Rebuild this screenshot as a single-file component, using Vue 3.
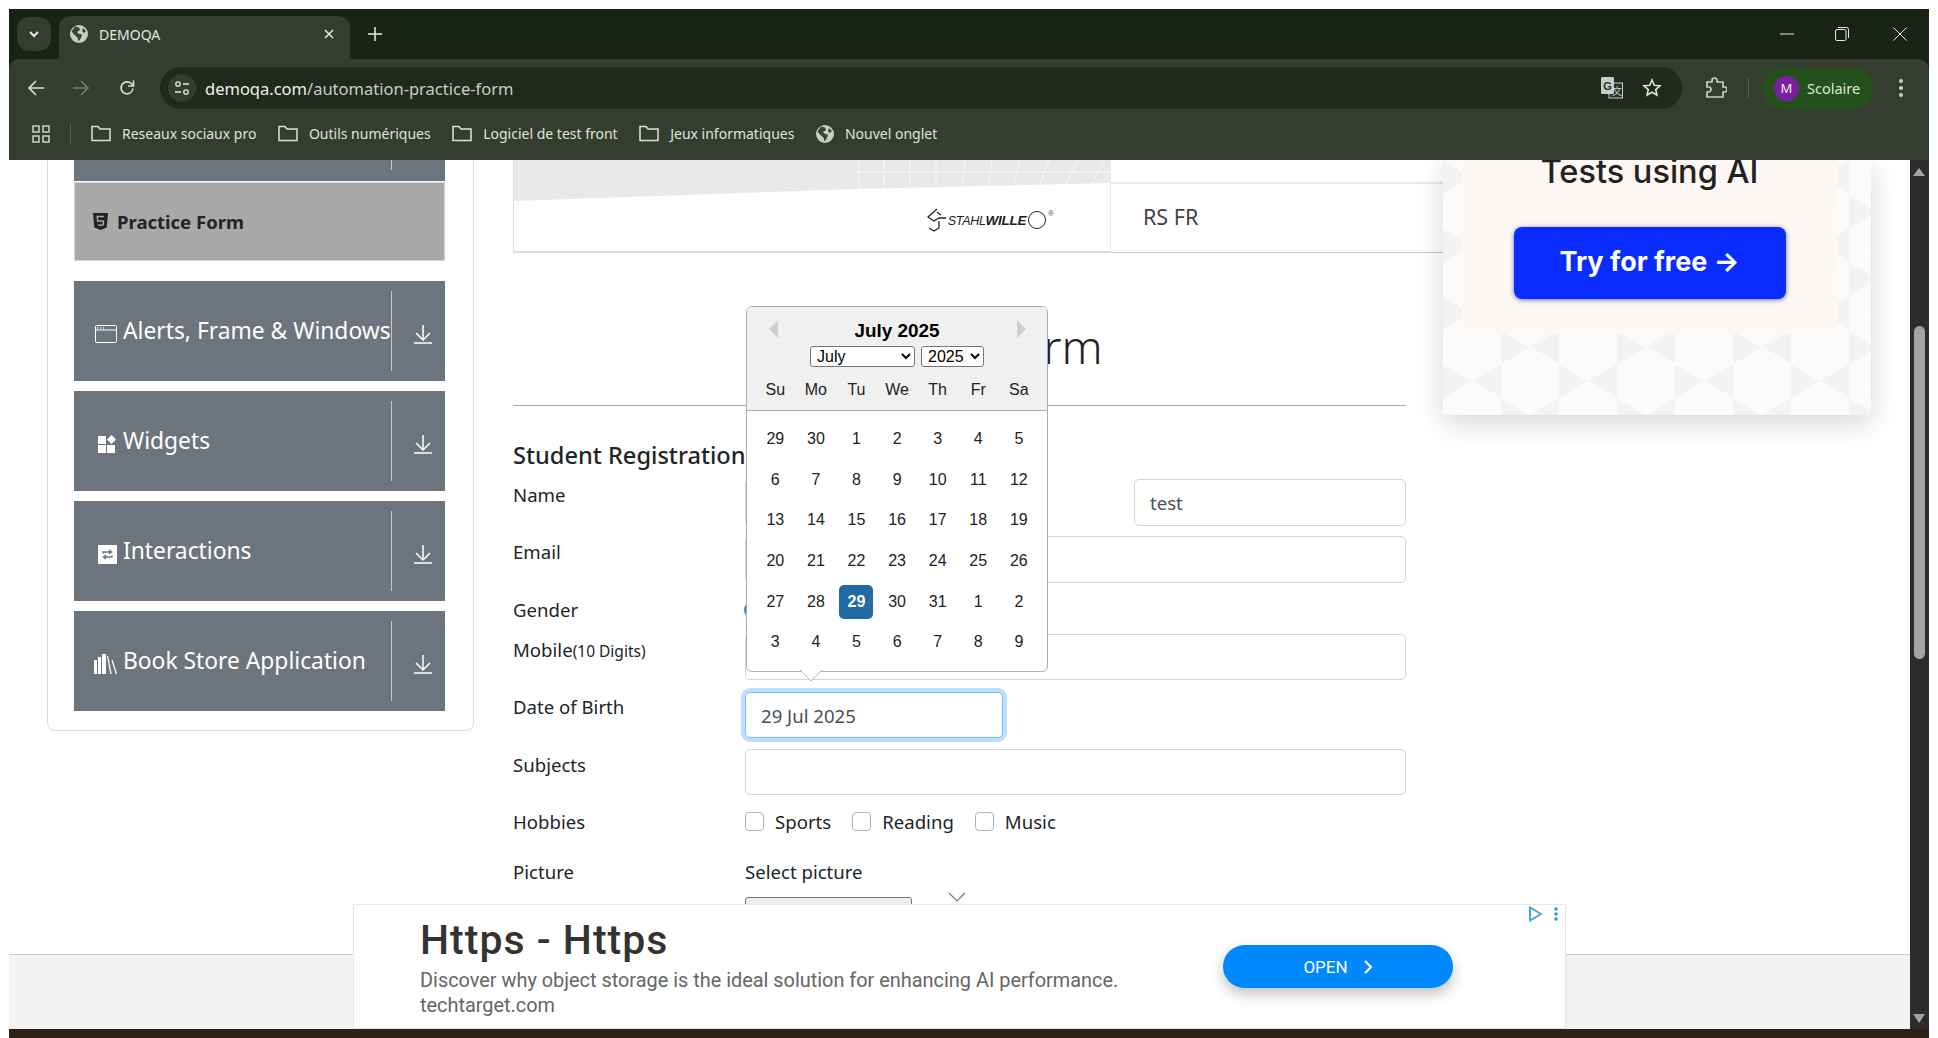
<script setup>
const bookmarks = [
  { label: 'Reseaux sociaux pro' },
  { label: 'Outils numériques' },
  { label: 'Logiciel de test front' },
  { label: 'Jeux informatiques' }
]
const navItems = [
  { label: 'Alerts, Frame & Windows', icon: 'window' },
  { label: 'Widgets', icon: 'widgets' },
  { label: 'Interactions', icon: 'swap' },
  { label: 'Book Store Application', icon: 'books' }
]
const weekdays = ['Su', 'Mo', 'Tu', 'We', 'Th', 'Fr', 'Sa']
const days = [29,30,1,2,3,4,5,6,7,8,9,10,11,12,13,14,15,16,17,18,19,20,21,22,23,24,25,26,27,28,29,30,31,1,2,3,4,5,6,7,8,9]
const selectedIndex = 30
const hobbies = ['Sports', 'Reading', 'Music']
</script>

<template>
  <div class="root">
    <div class="window">
      <header class="tabstrip">
        <button class="tab-menu">
          <svg width="12" height="12" viewBox="0 0 12 12"><path d="M2 4l4 4 4-4" fill="none" stroke="#e8ebe4" stroke-width="2"/></svg>
        </button>
        <div class="tab">
          <svg class="globe" width="18" height="18" viewBox="0 0 18 18"><circle cx="9" cy="9" r="9" fill="#c9cdc5"/><path d="M5 1.5l4 1 1 2.500-3 2 2 2 3 .5-1 3.500-2.500 3.500-1-4-3-2.500-3-3.500zM13 3l3 3-2 2-2-2z" fill="#3a4334"/></svg>
          <span class="tab-title">DEMOQA</span>
          <svg class="tab-close" width="12" height="12" viewBox="0 0 12 12"><path d="M2 2l8 8M10 2l-8 8" stroke="#e8ebe4" stroke-width="1.500"/></svg>
        </div>
        <svg class="tab-new" width="14" height="14" viewBox="0 0 14 14"><path d="M7 0v14M0 7h14" stroke="#e8ebe4" stroke-width="1.500"/></svg>
        <div class="win-controls">
          <svg width="14" height="14" viewBox="0 0 14 14"><path d="M0 7h14" stroke="#e8ebe4" stroke-width="1"/></svg>
          <svg width="14" height="14" viewBox="0 0 14 14"><rect x=".5" y="2.500" width="10.500" height="11" rx="1.500" fill="none" stroke="#e8ebe4"/><path d="M3 .5h8.500a2 2 0 012 2V11" fill="none" stroke="#e8ebe4"/></svg>
          <svg width="14" height="14" viewBox="0 0 14 14"><path d="M.5.5l13 13M13.500.5l-13 13" stroke="#e8ebe4" stroke-width="1"/></svg>
        </div>
      </header>

      <div class="toolbar">
        <svg class="nav-back" width="18" height="18" viewBox="0 0 18 18"><path d="M17 9H2M9 2L2 9l7 7" fill="none" stroke="#d8dcd4" stroke-width="1.700"/></svg>
        <svg class="nav-forward" width="18" height="18" viewBox="0 0 18 18"><path d="M1 9h15M9 2l7 7-7 7" fill="none" stroke="#737a6d" stroke-width="1.700"/></svg>
        <svg class="nav-reload" width="18" height="18" viewBox="0 0 18 18"><path d="M15 9.500a6 6 0 11-1.800-5L15.500 7M15.500 1.500V7H10" fill="none" stroke="#d8dcd4" stroke-width="1.700"/></svg>
        <div class="address">
          <span class="site-btn">
            <svg width="16" height="16" viewBox="0 0 16 16"><circle cx="4" cy="4" r="2.200" fill="none" stroke="#e8ebe4" stroke-width="1.300"/><path d="M9 4h6M1 12h6" stroke="#e8ebe4" stroke-width="1.500"/><circle cx="12" cy="12" r="2.200" fill="none" stroke="#e8ebe4" stroke-width="1.300"/></svg>
          </span>
          <span class="url"><span class="url-host">demoqa.com</span>/automation-practice-form</span>
          <svg class="translate" width="22" height="22" viewBox="0 0 22 22"><rect x="8" y="6" width="13.500" height="15" fill="#2a3324" stroke="#c9cdc5"/><rect x="0" y="0" width="13" height="17" rx="1.500" fill="#c9cdc5"/><text x="6.500" y="12.500" text-anchor="middle" font-size="11" font-weight="700" font-family="Liberation Sans" fill="#2a3324">G</text><text x="16" y="17.500" text-anchor="middle" font-size="10" font-family="Noto Sans CJK SC" fill="#c9cdc5">文</text></svg>
          <svg class="star" width="20" height="20" viewBox="0 0 20 20"><path d="M10 2l2.300 5.300 5.700.5-4.300 3.800 1.300 5.600-5-3-5 3 1.300-5.600L2 7.800l5.700-.5z" fill="none" stroke="#dfe2db" stroke-width="1.600"/></svg>
        </div>
        <svg class="puzzle" width="22" height="22" viewBox="0 0 22 22"><path d="M2 5h5V3.500a2.500 2.500 0 015 0V5h6v5h1.500a2.500 2.500 0 010 5H18v5H2v-5h1.500a2 2 0 000-5H2z" fill="none" stroke="#c9d0c2" stroke-width="1.700"/></svg>
        <span class="tool-sep"></span>
        <div class="profile">
          <span class="avatar">M</span>
          <span class="profile-name">Scolaire</span>
        </div>
        <svg class="kebab" width="6" height="20" viewBox="0 0 6 20"><circle cx="3" cy="3" r="2" fill="#cdd1c9"/><circle cx="3" cy="10" r="2" fill="#cdd1c9"/><circle cx="3" cy="17" r="2" fill="#cdd1c9"/></svg>
      </div>

      <nav class="bookmarks">
        <svg class="apps" width="18" height="18" viewBox="0 0 18 18"><g fill="none" stroke="#cfd3cb" stroke-width="1.500"><rect x="1" y="1" width="6" height="6"/><rect x="11" y="1" width="6" height="6"/><rect x="1" y="11" width="6" height="6"/><rect x="11" y="11" width="6" height="6"/></g></svg>
        <span class="bm-sep"></span>
        <span v-for="b in bookmarks" :key="b.label" class="bookmark">
          <svg width="20" height="17" viewBox="0 0 20 17"><path d="M1 15.500V1.500h6l2 2.500h10v11.500z" fill="none" stroke="#dfe2db" stroke-width="1.500"/></svg>
          {{ b.label }}
        </span>
        <span class="bookmark bookmark-globe">
          <svg width="18" height="18" viewBox="0 0 18 18"><circle cx="9" cy="9" r="9" fill="#c9cdc5"/><path d="M5 1.500l4 1 1 2.500-3 2 2 2 3 .5-1 3.500-2.500 3.500-1-4-3-2.500-3-3.500zM13 3l3 3-2 2-2-2z" fill="#3a4334"/></svg>
          Nouvel onglet
        </span>
      </nav>

      <div class="page">
        <div class="viewport">
          <div class="columns">
            <aside class="side-card">
              <div class="nav-clipped"><span class="nav-clipped-div"></span></div>
              <div class="nav-active">
                <svg width="15" height="17" viewBox="0 0 15 17"><path d="M0 0h15l-1.300 14.500L7.500 17 1.300 14.500z" fill="#212529"/><path d="M11 3.500H4.300l.3 4.500h5.900l-.3 3.600-2.700.9-2.700-.9" fill="none" stroke="#a9a9a9" stroke-width="1.500"/></svg>
                <span>Practice Form</span>
              </div>
              <div v-for="item in navItems" :key="item.label" class="nav-item">
                <span class="nav-icon">
                  <svg v-if="item.icon === 'window'" width="22" height="18" viewBox="0 0 22 18"><rect x=".5" y=".5" width="21" height="17" rx="1" fill="none" stroke="#fff"/><path d="M0 5h22" stroke="#fff"/><path d="M2 3h1M5 3h1M8 3h1" stroke="#fff" stroke-width="1.500"/></svg>
                  <svg v-else-if="item.icon === 'widgets'" width="20" height="18" viewBox="0 0 20 18"><rect x="1" y="1" width="8" height="8" fill="#fff"/><rect x="1" y="10" width="8" height="8" fill="#fff"/><rect x="10" y="10" width="8" height="8" fill="#fff"/><path d="M14.500 0l4.500 4.500-4.500 4.500L10 4.500z" fill="#fff"/></svg>
                  <svg v-else-if="item.icon === 'swap'" width="19" height="19" viewBox="0 0 19 19"><rect width="19" height="19" rx="1" fill="#fff"/><path d="M5 8.500V7h8M11 5l2.500 2L11 9M14 10.500V12H6M8 14l-2.500-2L8 10" fill="none" stroke="#6c757d" stroke-width="1.500"/></svg>
                  <svg v-else width="23" height="20" viewBox="0 0 23 20"><g fill="#fff"><rect x="0" y="6" width="3" height="14"/><rect x="4" y="3" width="3" height="17"/><rect x="8" y="0" width="4" height="20"/></g><path d="M13.500 2l3.500 18M18 6l4.500 14" stroke="#fff" stroke-width="1.300"/></svg>
                </span>
                <span class="nav-label">{{ item.label }}</span>
                <span class="nav-arrow">
                  <svg width="18" height="19" viewBox="0 0 18 19"><path d="M9 0v14M2 8l7 7 7-7M0 18h18" fill="none" stroke="#fff" stroke-width="1.500"/></svg>
                </span>
              </div>
            </aside>

            <main class="center">
              <div class="banner">
                <div class="banner-img">
                  <svg class="banner-art" width="597" height="45" viewBox="0 0 597 45">
                    <path d="M0 41L342 29 597 23V0H0z" fill="#e9e9e9"/>
                    <g stroke="#fff" stroke-width="1" stroke-opacity=".7"><path d="M345 28V0M370 28V0M396 27V0M422 26V0M448 26l3-26M474 26l4-26M500 25l6-25M526 24l9-24M552 24l11-24M578 23l13-23M342 12h255" fill="none"/></g>
                  </svg>
                  <div class="logo">
                    <svg width="20" height="24" viewBox="0 0 20 24"><path d="M10 1L1 9l6 4 5-3h7M10 4l4 3M12 13v7l-5 3-5-3" fill="none" stroke="#222" stroke-width="1.300"/></svg>
                    <span class="logo-text">STAHL<b>WILLE</b></span>
                    <span class="logo-ring"></span><span class="logo-reg">®</span>
                  </div>
                </div>
                <div class="banner-rs">RS FR</div>
              </div>

              <div class="form-area">
                <h1 class="title">Practice Form</h1>
                <h5 class="subtitle">Student Registration Form</h5>
                <form class="form" @submit.prevent>
                  <div class="row">
                    <label class="lbl">Name</label>
                    <div class="name-fields">
                      <input class="input first" />
                      <input class="input last" value="test" />
                    </div>
                  </div>
                  <div class="row">
                    <label class="lbl">Email</label>
                    <input class="input grow" />
                  </div>
                  <div class="row">
                    <label class="lbl">Gender</label>
                    <div class="genders">
                      <span class="radio"></span><span>Male</span>
                    </div>
                  </div>
                  <div class="row">
                    <label class="lbl">Mobile<small class="small">(10 Digits)</small></label>
                    <input class="input grow" />
                  </div>
                  <div class="row">
                    <label class="lbl lbl-up">Date of Birth</label>
                    <input class="input date" value="29 Jul 2025" />
                  </div>
                  <div class="row">
                    <label class="lbl">Subjects</label>
                    <input class="input grow" />
                  </div>
                  <div class="row">
                    <label class="lbl">Hobbies</label>
                    <div class="hobbies">
                      <span v-for="h in hobbies" :key="h" class="hobby"><span class="check"></span>{{ h }}</span>
                    </div>
                  </div>
                  <div class="row">
                    <label class="lbl">Picture</label>
                    <div class="picture">
                      <div class="pic-label">Select picture</div>
                      <div class="file-btn"></div>
                    </div>
                  </div>
                </form>
              </div>
            </main>

            <aside class="side-ad">
              <svg class="tri-bg" width="428" height="255" viewBox="0 0 428 255">
                <defs>
                  <pattern id="tri" width="116" height="68" patternUnits="userSpaceOnUse">
                    <path d="M0 0l29 17L0 34zM58 0L29 17l29 17zM58 34l29 17-29 17zM116 34L87 51l29 17z" fill="#f3f3f3"/>
                    <path d="M0 0l116 68M116 0L0 68M29 0v68M87 0v68" stroke="#fff" stroke-width="1" stroke-opacity=".7"/>
                  </pattern>
                </defs>
                <rect width="428" height="255" fill="#fbfbfb"/>
                <rect width="428" height="255" fill="url(#tri)"/>
              </svg>
              <div class="cream">
                <div class="ad-title">Tests using AI</div>
                <div class="ad-btn">Try for free →</div>
              </div>
            </aside>
          </div>

          <div class="datepicker">
            <div class="dp-head">
              <span class="dp-prev"></span>
              <span class="dp-next"></span>
              <div class="dp-title">July 2025</div>
              <div class="dp-selects">
                <select class="dp-month"><option>July</option></select>
                <select class="dp-year"><option>2025</option></select>
              </div>
              <div class="dp-grid dp-week">
                <span v-for="w in weekdays" :key="w">{{ w }}</span>
              </div>
            </div>
            <div class="dp-grid dp-days">
              <span v-for="(d, i) in days" :key="i" class="dp-day" :class="{ selected: i === selectedIndex }">{{ d }}</span>
            </div>
            <svg class="dp-arrow" width="22" height="12" viewBox="0 0 22 12"><path d="M0 0h22L11 11z" fill="#fff"/><path d="M0 0l11 11L22 0" fill="none" stroke="#b9b9b9"/></svg>
          </div>

          <footer class="foot"></footer>

          <div class="bottom-ad">
            <svg class="ad-chevron" width="18" height="10" viewBox="0 0 18 10"><path d="M1 1l8 8 8-8" fill="none" stroke="#777" stroke-width="1.200"/></svg>
            <svg class="ad-choice" width="14" height="16" viewBox="0 0 14 16"><path d="M2 1.500v13L13 8z" fill="none" stroke="#4aa8e0" stroke-width="2"/></svg>
            <svg class="ad-dots" width="4" height="14" viewBox="0 0 4 14"><circle cx="2" cy="2" r="1.800" fill="#1aa3c9"/><circle cx="2" cy="7" r="1.800" fill="#1aa3c9"/><circle cx="2" cy="12" r="1.800" fill="#1aa3c9"/></svg>
            <div class="ad-copy">
              <div class="ad-head">Https - Https</div>
              <div class="ad-desc">Discover why object storage is the ideal solution for enhancing AI performance.</div>
              <div class="ad-src">techtarget.com</div>
            </div>
            <div class="ad-open">OPEN
              <svg width="10" height="16" viewBox="0 0 10 16"><path d="M2 2l6 6-6 6" fill="none" stroke="#fff" stroke-width="2.200"/></svg>
            </div>
          </div>
        </div>

        <div class="scrollbar">
          <span class="sb-up"></span>
          <span class="sb-thumb"></span>
          <span class="sb-down"></span>
        </div>
      </div>
    </div>
    <div class="band"></div>
  </div>
</template>

<style>
html, body { margin: 0; background: #fff; overflow: hidden; }
</style>

<style scoped>
.root { width: 1938px; height: 1038px; background: #fff; overflow: hidden; font-family: "Noto Sans", sans-serif; }
.window { margin: 9px 9px 0; width: 1920px; height: 1020px; background: #1a2415; display: flex; flex-direction: column; }
.band { margin-left: 9px; width: 1920px; height: 9px; background: #2b2115; }

.tabstrip { height: 50px; display: flex; align-items: flex-start; position: relative; }
.tab-menu { margin: 8px 0 0 8px; width: 34px; height: 34px; border: 0; padding: 0; border-radius: 12px; background: #343d2e; display: flex; align-items: center; justify-content: center; }
.tab { margin: 7px 0 0 8px; width: 291px; height: 43px; box-sizing: border-box; padding: 0 15px 7px 11px; background: #343d2e; border-radius: 12px 12px 0 0; display: flex; align-items: center; gap: 11px; color: #e4e7e0; font-size: 14px; }
.tab-title { flex: 1; font-family: "Noto Sans", sans-serif; }
.tab-new { margin: 18px 0 0 18px; }
.win-controls { margin-left: auto; margin-top: 18px; margin-right: 22px; display: flex; gap: 44px; }
.win-controls svg:first-child { margin-right: -3px; }

.toolbar { height: 51px; background: #343d2e; border-radius: 10px 10px 0 0; display: flex; align-items: center; box-sizing: border-box; padding-top: 7px; }
.nav-back { margin-left: 18px; }
.nav-forward { margin-left: 27px; }
.nav-reload { margin-left: 28px; }
.address { margin-left: 24px; width: 1522px; height: 42px; border-radius: 21px; background: #1f2a1a; display: flex; align-items: center; box-sizing: border-box; padding: 0 20px 0 8px; }
.site-btn { width: 28px; height: 28px; border-radius: 50%; background: #343d2e; display: flex; align-items: center; justify-content: center; }
.url { margin-left: 9px; flex: 1; font-size: 16.500px; color: #c9cdc5; white-space: nowrap; }
.url-host { color: #eef0eb; }
.translate { margin-right: 19px; }
.puzzle { margin-left: 23px; }
.tool-sep { margin-left: 21px; width: 1px; height: 20px; background: #5a6254; }
.profile { margin-left: 13px; width: 111px; height: 41px; border-radius: 21px; background: #24501c; display: flex; align-items: center; box-sizing: border-box; padding-left: 12px; gap: 8px; }
.avatar { width: 25px; height: 25px; border-radius: 50%; background: #7b1fa2; color: #eee; font-size: 13px; display: flex; align-items: center; justify-content: center; }
.profile-name { font-size: 14.500px; color: #dfe6da; }
.kebab { margin-left: 25px; }

.bookmarks { height: 50px; background: #343d2e; display: flex; align-items: center; padding-left: 23px; padding-bottom: 3px; color: #e0e3dc; font-size: 14px; white-space: nowrap; box-sizing: border-box; }
.bm-sep { margin: 0 20px 0 20px; width: 1px; height: 20px; background: #5a6254; }
.bookmark { display: inline-flex; align-items: center; gap: 11px; margin-right: 21.500px; }
.bookmark-globe { gap: 11px; }

.page { flex: 1; display: flex; min-height: 0; }
.viewport { flex: 1; position: relative; overflow: hidden; background: #fff; }
.columns { display: flex; align-items: flex-start; color: #212529; }

.side-card { margin-left: 38px; width: 427px; box-sizing: border-box; border: 1px solid #dcdcdc; border-top: 0; border-radius: 0 0 8px 8px; padding: 0 28px 19px 26px; }
.nav-clipped { height: 21px; background: #6c757d; position: relative; }
.nav-clipped-div { display: block; margin-left: 317px; width: 1px; height: 10px; background: #c5c9cc; }
.nav-active { margin-top: 1px; height: 79px; box-sizing: border-box; background: #a9a9a9; border: 1px solid #ced4da; display: flex; align-items: center; padding-left: 18px; gap: 9px; font-size: 18.500px; font-weight: 700; color: #212529; margin-bottom: 20px; }
.nav-item { height: 100px; background: #6c757d; color: #fff; display: flex; align-items: center; margin-bottom: 10px; font-size: 22.800px; position: relative; }
.nav-item:last-child { margin-bottom: 0; }
.nav-icon { width: 49px; flex: none; display: flex; justify-content: flex-end; padding-right: 6px; box-sizing: border-box; margin-top: 6px; }
.nav-label { white-space: nowrap; flex: 1; margin-top: -2px; }
.nav-arrow { flex: none; width: 54px; height: 80px; box-sizing: border-box; border-left: 1px solid #c5c9cc; display: flex; align-items: center; justify-content: center; padding: 6px 0 0 8px; }

.center { margin-left: 39px; width: 930px; flex: none; }
.banner { height: 93px; display: flex; }
.banner-img { width: 597px; box-sizing: border-box; border-left: 1px solid #ddd; border-bottom: 2px solid #ddd; position: relative; display: flex; align-items: flex-end; justify-content: flex-end; padding: 0 56px 19px 0; }
.banner-art { position: absolute; left: 0; top: 0; }
.logo { display: flex; align-items: center; gap: 1px; position: relative; }
.logo-text { font: italic 400 12.500px "Liberation Sans", sans-serif; color: #222; letter-spacing: -.3px; }
.logo-text b { font-weight: 700; font-size: 13.500px; }
.logo-ring { width: 18px; height: 18px; border: 1.500px solid #222; border-radius: 50%; margin-left: 1px; box-sizing: border-box; }
.logo-reg { font: 8px "Liberation Sans", sans-serif; color: #555; margin: -14px 0 0 1px; }
.banner-rs { flex: 1; margin-top: 22px; box-sizing: border-box; border-top: 2px solid #e8e8e8; border-left: 1px solid #e8e8e8; border-bottom: 1px solid #ccc; padding-left: 32px; font-size: 21.500px; line-height: 65px; color: #444; }

.form-area { width: 893px; }
.title { margin: 0; padding-top: 59px; height: 153px; box-sizing: border-box; border-bottom: 1px solid #aaa; text-align: center; font-size: 46px; font-weight: 300; line-height: 68px; color: #212529; }
.subtitle { margin: 0; height: 73px; box-sizing: border-box; padding-top: 33px; font-size: 23.600px; font-weight: 500; line-height: 32px; white-space: nowrap; color: #212529; }
.form { display: grid; grid-template-rows: 57px 58px 40px 58px 57px 57px 50px auto; }
.row { display: flex; align-items: flex-start; }
.lbl { width: 232px; flex: none; font-size: 18.600px; line-height: 32px; color: #212529; white-space: nowrap; }
.lbl-up { margin-top: -1px; }
.small { font-size: 15.500px; }
.input { height: 47px; box-sizing: border-box; border: 1px solid #ced4da; border-radius: 5px; background: #fff; padding: 0 15px; font: 18.600px "Noto Sans", sans-serif; color: #495057; outline: none; }
.grow { width: 661px; height: 46px; }
.row:nth-child(2) .grow { height: 47px; }
.name-fields { display: flex; justify-content: space-between; width: 661px; }
.first { width: 290px; }
.last { width: 272px; }
.date { width: 258px; height: 46px; border-color: #80bdff; box-shadow: 0 0 0 4px #bfdeff; }
.genders { display: flex; align-items: center; gap: 8px; height: 32px; font-size: 18.600px; }
.radio { width: 18px; height: 18px; margin-left: -1px; border-radius: 50%; border: 3px solid #2f86e6; box-sizing: border-box; }
.hobbies { display: flex; height: 30px; align-items: center; font-size: 18.600px; color: #212529; }
.hobby { display: inline-flex; align-items: center; margin-right: 21px; }
.check { width: 19px; height: 19px; box-sizing: border-box; border: 1px solid #adb5bd; border-radius: 4px; margin-right: 11px; }
.pic-label { font-size: 18.600px; line-height: 32px; color: #212529; }
.file-btn { margin-top: 9px; width: 167px; height: 40px; background: #efefef; border: 1px solid #767676; border-radius: 3px; box-sizing: border-box; }

.side-ad { flex: none; width: 428px; height: 255px; position: relative; box-shadow: 0 8px 26px rgba(0, 0, 0, .16); background: #fafafa; }
.tri-bg { position: absolute; inset: 0; }
.cream { position: relative; margin: 0 34px 0 19px; height: 174px; background: #fdf8f3; box-sizing: border-box; display: flex; flex-direction: column; align-items: center; }
.ad-title { margin-top: -8px; font: 500 32.500px/40px Inter, sans-serif; color: #222; white-space: nowrap; }
.ad-btn { margin-top: 35px; width: 272px; height: 72px; border-radius: 8px; background: #0a2cff; box-shadow: 0 1px 5px rgba(20, 30, 200, .6); color: #fff; font: 700 27px/70px Inter, sans-serif; text-align: center; }

.datepicker { position: absolute; left: 737px; top: 146px; width: 302px; height: 366px; box-sizing: border-box; border: 1px solid #aeaeae; border-radius: 6px; background: #fff; font-family: "Liberation Sans", sans-serif; color: #000; }
.dp-head { height: 104px; box-sizing: border-box; background: #f0f0f0; border-bottom: 1px solid #aeaeae; border-radius: 5px 5px 0 0; position: relative; padding-top: 12px; }
.dp-prev, .dp-next { position: absolute; top: 13px; width: 0; height: 0; border-top: 9px solid transparent; border-bottom: 9px solid transparent; }
.dp-prev { left: 22px; border-right: 9px solid #ccd0d5; }
.dp-next { right: 21px; border-left: 9px solid #ccd0d5; }
.dp-title { text-align: center; font-weight: 700; font-size: 18.900px; line-height: 24px; }
.dp-selects { display: flex; justify-content: center; gap: 6px; margin-top: 3px; }
.dp-selects select { height: 21px; padding: 0 0 0 2px; font: 16px "Liberation Sans", sans-serif; background: #fff; color: #000; border: 1px solid #767676; border-radius: 3px; box-sizing: border-box; }
.dp-month { width: 105px; }
.dp-year { width: 63px; }
.dp-grid { display: grid; grid-template-columns: repeat(7, 40.600px); padding-left: 8px; justify-items: center; align-items: center; font-size: 16px; color: #222; }
.dp-week { margin-top: 9px; line-height: 28px; }
.dp-days { padding-top: 8px; grid-auto-rows: 40.600px; }
.dp-day { width: 34px; height: 34px; line-height: 34px; text-align: center; border-radius: 5px; }
.selected { background: #216ba5; color: #fff; font-weight: 700; }
.dp-arrow { position: absolute; left: 53px; bottom: -11px; }

.foot { position: absolute; left: 0; right: 0; bottom: 0; height: 75px; box-sizing: border-box; background: #f3f3f3; border-top: 1px solid #ccc; }
.bottom-ad { position: absolute; left: 344px; top: 744px; width: 1213px; height: 125px; box-sizing: border-box; background: #fff; border: 1.500px solid #e6e6e6; display: flex; align-items: flex-start; justify-content: space-between; padding: 0 112px 0 66px; font-family: Roboto, sans-serif; }
.ad-chevron { position: absolute; left: 594px; top: -13px; }
.ad-choice { position: absolute; right: 23px; top: 1px; }
.ad-dots { position: absolute; right: 7px; top: 2px; }
.ad-copy { padding-top: 10px; }
.ad-head { font-size: 41px; font-weight: 500; line-height: 50px; color: #333; letter-spacing: 1px; }
.ad-desc { margin-top: 3px; font-size: 19.900px; line-height: 25px; color: #666; white-space: nowrap; }
.ad-src { font-size: 19.900px; line-height: 25px; color: #666; }
.ad-open { margin-top: 40px; width: 230px; height: 43px; border-radius: 22px; background: #0088ff; box-shadow: 0 6px 14px rgba(0, 0, 0, .25); color: #fff; font-size: 17px; display: flex; align-items: center; justify-content: center; gap: 15px; }

.scrollbar { width: 19px; flex: none; background: #2c2c2c; position: relative; }
.sb-thumb { position: absolute; left: 4px; top: 166px; width: 11px; height: 333px; border-radius: 6px; background: #a3a3a3; }
.sb-up, .sb-down { position: absolute; left: 3px; width: 0; height: 0; border-left: 6.500px solid transparent; border-right: 6.500px solid transparent; }
.sb-up { top: 8px; border-bottom: 8px solid #a3a3a3; }
.sb-down { bottom: 6px; border-top: 9px solid #a3a3a3; }
</style>
